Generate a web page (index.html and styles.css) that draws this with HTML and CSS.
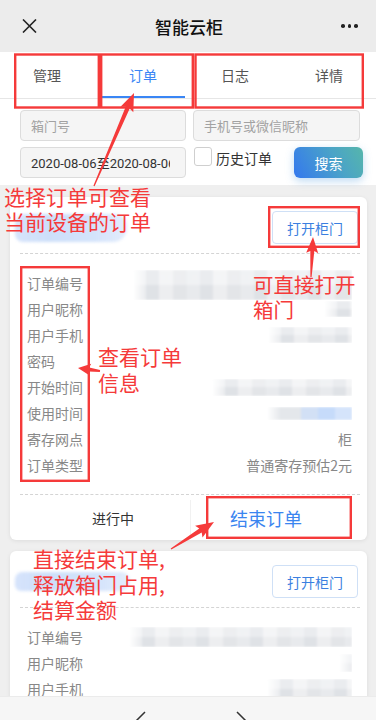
FILE: index.html
```html
<!DOCTYPE html>
<html lang="zh-CN">
<head>
<meta charset="utf-8">
<title>智能云柜</title>
<link rel="stylesheet" href="styles.css">
</head>
<body>
<div class="page">
  <header class="topbar">
    <svg class="close" width="15" height="14" viewBox="0 0 15 14"><path d="M1 0.5 L14 13.5 M14 0.5 L1 13.5" stroke="#222" stroke-width="1.6" fill="none"/></svg>
    <h1 class="title">智能云柜</h1>
    <span class="more"><i></i><i></i><i></i></span>
  </header>

  <nav class="tabs">
    <span class="tab">管理</span>
    <span class="tab active">订单</span>
    <span class="tab">日志</span>
    <span class="tab">详情</span>
  </nav>

  <section class="filters">
    <div class="field placeholder"><span>箱门号</span></div>
    <div class="field placeholder"><span>手机号或微信昵称</span></div>
    <div class="field date"><span>2020-08-06至2020-08-06</span></div>
    <div class="actions">
      <span class="check"></span>
      <span class="check-label">历史订单</span>
      <button class="search">搜索</button>
    </div>
  </section>

  <main class="list">
    <article class="card">
      <div class="card-head"><button class="open">打开柜门</button></div>
      <dl class="info">
        <div class="row"><dt>订单编号</dt><dd><span class="mosaic m-id"></span></dd></div>
        <div class="row"><dt>用户昵称</dt><dd><span class="mosaic m-nick"></span></dd></div>
        <div class="row"><dt>用户手机</dt><dd><span class="mosaic m-phone"></span></dd></div>
        <div class="row"><dt>密码</dt><dd></dd></div>
        <div class="row"><dt>开始时间</dt><dd><span class="mosaic m-start"></span></dd></div>
        <div class="row"><dt>使用时间</dt><dd><span class="mosaic m-use"></span></dd></div>
        <div class="row"><dt>寄存网点</dt><dd>柜</dd></div>
        <div class="row"><dt>订单类型</dt><dd>普通寄存预估2元</dd></div>
      </dl>
      <div class="card-foot"><span class="status">进行中</span><span class="end">结束订单</span></div>
    </article>

    <article class="card">
      <div class="card-head"><button class="open">打开柜门</button></div>
      <dl class="info">
        <div class="row"><dt>订单编号</dt><dd><span class="mosaic m-id2"></span></dd></div>
        <div class="row"><dt>用户昵称</dt><dd><span class="mosaic m-nick2"></span></dd></div>
        <div class="row"><dt>用户手机</dt><dd><span class="mosaic m-phone2"></span></dd></div>
        <div class="row"><dt>密码</dt><dd></dd></div>
        <div class="row"><dt>开始时间</dt><dd></dd></div>
        <div class="row"><dt>使用时间</dt><dd></dd></div>
        <div class="row"><dt>寄存网点</dt><dd>柜</dd></div>
        <div class="row"><dt>订单类型</dt><dd>普通寄存预估2元</dd></div>
      </dl>
      <div class="card-foot"><span class="status">进行中</span><span class="end">结束订单</span></div>
    </article>
  </main>

  <footer class="navbar">
    <svg width="376" height="24" viewBox="0 0 376 24"><path d="M145 16 L135 26 M237 16 L247 26" stroke="#333" stroke-width="1.5" fill="none"/></svg>
  </footer>

  <div class="annot">
    <span class="smear smear-1"></span>
    <span class="smear smear-2"></span>
    <svg class="marks" width="376" height="720" viewBox="0 0 376 720">
      <g fill="none" stroke="#f53a3a" stroke-width="2.4">
        <rect x="15.2" y="54.5" width="83.6" height="53"/>
        <rect x="101.2" y="54.5" width="91.6" height="53"/>
        <rect x="195.5" y="54.5" width="167.3" height="53"/>
        <rect x="269.2" y="207.2" width="89.6" height="39.6"/>
        <rect x="21.2" y="267.2" width="67.6" height="213.6"/>
        <rect x="207.2" y="497.2" width="143.6" height="40.6"/>
      </g>
      <g fill="#f53a3a">
        <polygon points="93.4,185.8 125.7,106.8 120.5,106.7 134,93 133.3,112.3 129.7,108.6 94.6,186.2"/>
        <polygon points="310.4,277 310.3,250.9 306.2,252.7 313,237 318.2,253.3 314.3,251.1 311.6,277"/>
        <polygon points="99.9,372 88.6,371.5 89.6,375.6 78,368 91.2,363.8 89.2,367.5 100.1,370"/>
        <polygon points="170.7,548.5 199.3,528.6 195.1,525.7 214,522 202.5,537.5 201.7,532.4 171.3,549.5"/>
      </g>
    </svg>
    <p class="note note-1">选择订单可查看<br>当前设备的订单</p>
    <p class="note note-2">可直接打开<br>箱门</p>
    <p class="note note-3">查看订单<br>信息</p>
    <p class="note note-4">直接结束订单,<br>释放箱门占用,<br>结算金额</p>
  </div>
</div>
</body>
</html>
```

FILE: styles.css
```css
* { box-sizing: border-box; margin: 0; padding: 0; }
html, body { width: 376px; height: 720px; overflow: hidden; }
body {
  font-family: "Noto Sans CJK SC", "Noto Sans", sans-serif;
  color: #333;
  background: #efefef;
}
.page {
  position: relative;
  width: 376px;
  height: 720px;
  overflow: hidden;
  background: #efefef;
}

/* top bar */
.topbar {
  height: 52px;
  background: #ececec;
  display: flex;
  align-items: center;
  padding: 0 18px 0 22px;
}
.close { display: block; }
.title {
  flex: 1;
  text-align: center;
  font-size: 17px;
  font-weight: 500;
  color: #111;
  line-height: 1;
}
.more { display: flex; gap: 3px; width: 17px; }
.more i { width: 3.6px; height: 3.6px; border-radius: 50%; background: #222; }

/* tabs */
.tabs {
  display: grid;
  grid-template-columns: repeat(4, 1fr);
  height: 47px;
  background: #fff;
  border-bottom: 1px solid #e6e6e6;
}
.tab {
  display: flex;
  align-items: center;
  justify-content: center;
  font-size: 14px;
  color: #555;
}
.tab.active {
  color: #3a86f5;
  margin: 0 3px 0 7px;
  box-shadow: inset 0 -2px 0 #3a86f5;
}

/* filters */
.filters {
  background: #fff;
  padding: 11px 16px 7px 20px;
  display: grid;
  grid-template-columns: 166px 167px;
  grid-auto-rows: 31px;
  gap: 6px 7px;
}
.field {
  display: flex;
  align-items: center;
  background: #f5f5f5;
  border: 1px solid #dcdcdc;
  border-radius: 4px;
  padding: 0 15px 0 10px;
  font-size: 13px;
}
.field span { flex: 1; overflow: hidden; white-space: nowrap; }
.placeholder { color: #a2a2a2; }
.date { color: #333; font-family: "Roboto", "Noto Sans CJK SC", sans-serif; }
.actions {
  display: flex;
  align-items: flex-start;
  margin-right: -3px;
  padding-left: 1px;
}
.check {
  width: 18px;
  height: 19px;
  border: 1px solid #cfcfcf;
  border-radius: 3px;
  background: #fff;
}
.check-label {
  margin-left: 4px;
  font-size: 14px;
  line-height: 23px;
  color: #333;
}
.search {
  margin-left: auto;
  width: 69px;
  height: 31px;
  border: none;
  border-radius: 6px;
  background: linear-gradient(60deg, #3478ee 0%, #4aa3c8 60%, #56b6ab 100%);
  color: #fff;
  font-family: inherit;
  font-size: 14px;
  box-shadow: 0 3px 8px rgba(70, 150, 220, 0.35);
}

/* list */
.list { padding: 12px 9px 0 10px; }
.card {
  background: #fff;
  border-radius: 6px;
  box-shadow: 0 1px 4px rgba(0, 0, 0, 0.08);
  margin-bottom: 11px;
}
.card-head {
  display: flex;
  justify-content: flex-end;
  padding: 14px 9px 9px;
}
.open {
  width: 86px;
  height: 33px;
  border: 1px solid #cfe0f6;
  border-radius: 4px;
  background: #fff;
  color: #3b7fe0;
  font-family: inherit;
  font-size: 14px;
}
.info {
  margin: 0 7px 0 10px;
  border-top: 1px dashed #d4d4d4;
  border-bottom: 1px dashed #d4d4d4;
  padding: 16px 8px 16px 7px;
}
.row {
  display: flex;
  justify-content: space-between;
  align-items: center;
  height: 26px;
  font-size: 14px;
  color: #888;
}
.row dd { display: flex; align-items: center; }
.card-foot {
  display: grid;
  grid-template-columns: 180px 1fr;
  height: 45px;
}
.status, .end {
  display: flex;
  align-items: center;
  justify-content: center;
}
.status { padding-left: 26px; font-size: 14px; color: #333; }
.end {
  padding-right: 26px;
  font-size: 18px;
  color: #3a85f0;
  border-left: 1px solid #f1f1f1;
  margin: 5px 0;
}

/* blurred values */
.mosaic {
  display: block;
  background:
    linear-gradient(180deg, rgba(255,255,255,0.25) 0 50%, rgba(0,0,0,0.015) 50% 100%),
    repeating-linear-gradient(90deg, #eceef1 0 13px, #e3e6ea 13px 26px, #f1f2f4 26px 40px, #e7e9ec 40px 54px);
  filter: blur(0.8px);
  -webkit-mask-image: linear-gradient(90deg, transparent 0, #000 14px);
  mask-image: linear-gradient(90deg, transparent 0, #000 14px);
}
.m-id { width: 219px; height: 30px; margin-bottom: -4px; }
.m-nick { width: 28px; height: 16px; }
.m-phone { width: 84px; height: 16px; }
.m-start { width: 140px; height: 17px; }
.m-use {
  width: 85px;
  height: 13px;
  background: linear-gradient(90deg, #e4e7eb 0 40%, #d2e0f5 40% 60%, #c6dbfa 60% 80%, #d5e4fb 80% 100%);
}
.m-id2 { width: 223px; height: 20px; }
.m-nick2 { width: 13px; height: 18px; }
.m-phone2 { width: 85px; height: 20px; }

/* bottom browser bar */
.navbar {
  position: absolute;
  left: 0;
  right: 0;
  bottom: 0;
  height: 24px;
  background: #f6f6f6;
  border-top: 1px solid #ebebeb;
  overflow: hidden;
}
.navbar svg { display: block; margin-top: -1px; }

/* annotation layer */
.annot {
  position: absolute;
  inset: 0;
  pointer-events: none;
}
.marks { position: absolute; left: 0; top: 0; }
.smear {
  position: absolute;
  border-radius: 10px 12px 14px 8px;
  background: linear-gradient(90deg, rgba(200,218,250,0.75), #cddff9 30%, #d3e3fb 70%, rgba(220,232,252,0.8));
  filter: blur(1.5px);
}
.smear-1 { left: 15px; top: 214px; width: 112px; height: 28px; }
.smear-2 { left: 15px; top: 572px; width: 115px; height: 19px; }
.note {
  position: absolute;
  color: #f53a3a;
  font-size: 21px;
  white-space: nowrap;
}
.note-1 { left: 4px; top: 183.5px; line-height: 25px; }
.note-2 { left: 253px; top: 271.5px; line-height: 25px; font-size: 20.5px; }
.note-3 { left: 98px; top: 343px; line-height: 26px; }
.note-4 { left: 33px; top: 546px; line-height: 25.5px; }
```
